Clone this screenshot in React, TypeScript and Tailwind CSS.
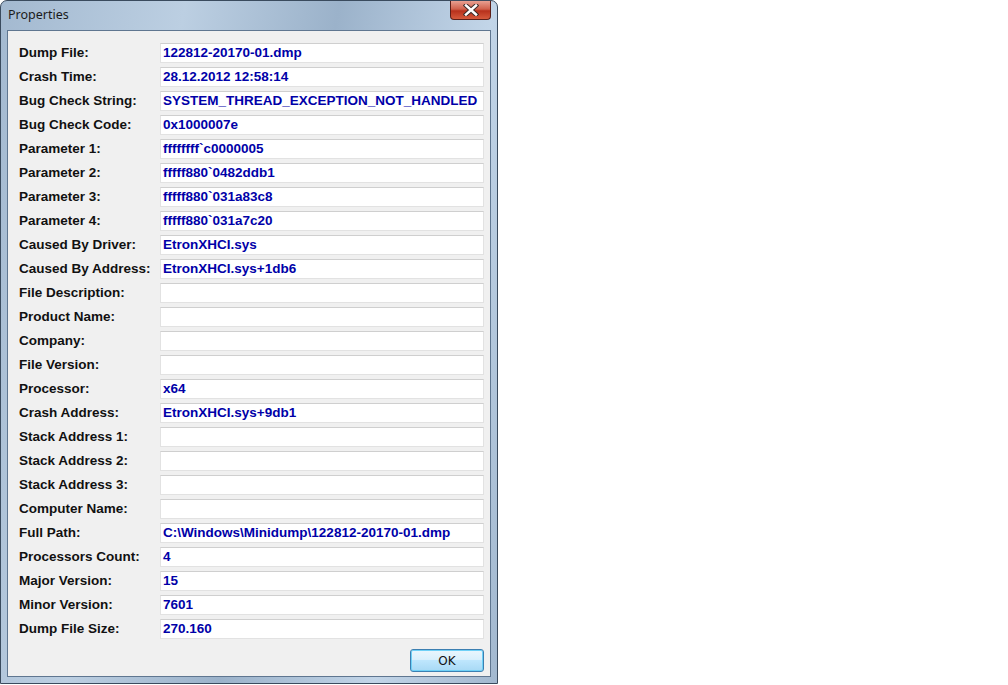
const rows: [string, string][] = [
  ["Dump File:", "122812-20170-01.dmp"],
  ["Crash Time:", "28.12.2012 12:58:14"],
  ["Bug Check String:", "SYSTEM_THREAD_EXCEPTION_NOT_HANDLED"],
  ["Bug Check Code:", "0x1000007e"],
  ["Parameter 1:", "ffffffff`c0000005"],
  ["Parameter 2:", "fffff880`0482ddb1"],
  ["Parameter 3:", "fffff880`031a83c8"],
  ["Parameter 4:", "fffff880`031a7c20"],
  ["Caused By Driver:", "EtronXHCI.sys"],
  ["Caused By Address:", "EtronXHCI.sys+1db6"],
  ["File Description:", ""],
  ["Product Name:", ""],
  ["Company:", ""],
  ["File Version:", ""],
  ["Processor:", "x64"],
  ["Crash Address:", "EtronXHCI.sys+9db1"],
  ["Stack Address 1:", ""],
  ["Stack Address 2:", ""],
  ["Stack Address 3:", ""],
  ["Computer Name:", ""],
  ["Full Path:", "C:\\Windows\\Minidump\\122812-20170-01.dmp"],
  ["Processors Count:", "4"],
  ["Major Version:", "15"],
  ["Minor Version:", "7601"],
  ["Dump File Size:", "270.160"],
];

export default function App() {
  return (
    <div className="w-[1008px] h-[685px] bg-white flex font-['Liberation_Sans',sans-serif]">
      {/* window frame */}
      <div className="w-[498px] h-[684px] flex flex-col rounded-t-[7px] border border-[#3a4b5e] bg-[linear-gradient(100deg,#a3b9d0_0%,#bccfe2_30%,#9bb2ca_55%,#c2d5e8_80%,#a2b8cf_100%)]">
        {/* title bar */}
        <div className="h-[29px] flex items-start justify-between pl-[7px] pr-[6px]">
          <span className="mt-[8px] text-[12.5px] text-[#1b1b1b] font-['Noto_Sans',sans-serif] leading-none">
            Properties
          </span>
          <div className="w-[41px] h-[19px] rounded-b-[4px] border border-t-0 border-[#5c1f18] bg-[linear-gradient(180deg,#e8a091_0%,#d0614c_45%,#b8311c_55%,#d65a3c_100%)] flex items-center justify-center">
            <svg width="16" height="12" viewBox="0 0 16 12">
              <path
                d="M3 1.5 L13 10.5 M13 1.5 L3 10.5"
                stroke="#3a2a28"
                strokeWidth="4.5"
                strokeLinecap="square"
              />
              <path
                d="M3 1.5 L13 10.5 M13 1.5 L3 10.5"
                stroke="#ffffff"
                strokeWidth="2.5"
                strokeLinecap="square"
              />
            </svg>
          </div>
        </div>

        {/* client area */}
        <div className="mx-[6px] flex-1 flex flex-col bg-[#f0f0f0] border border-[#5f7690]">
          <div className="pt-[12px] pl-[11px] pr-[6px] flex flex-col gap-[4px]">
            {rows.map(([label, value]) => (
              <div key={label} className="flex items-center h-[20px]">
                <span className="w-[141px] text-[13.5px] font-bold text-[#111] whitespace-nowrap">{label}</span>
                <div className="flex-1 h-[20px] bg-white border border-[#e2e2e2] border-t-[#cfcfcf] flex items-center pl-[2px]">
                  <span className="text-[13.5px] font-bold text-[#0000a8] whitespace-nowrap">{value}</span>
                </div>
              </div>
            ))}
          </div>
          <div className="flex justify-end pr-[6px] mt-[10px]">
            <button className="w-[74px] h-[23px] rounded-[3px] border border-[#3c7fb1] bg-[linear-gradient(180deg,#eaf6fd_0%,#d9f0fc_45%,#bee6fd_50%,#a7d9f5_100%)] text-[12px] text-[#111] font-['DejaVu_Sans',sans-serif] shadow-[inset_0_0_0_1px_#6fd1f7]">
              OK
            </button>
          </div>
        </div>
        <div className="h-[6px]" />
      </div>
    </div>
  );
}
